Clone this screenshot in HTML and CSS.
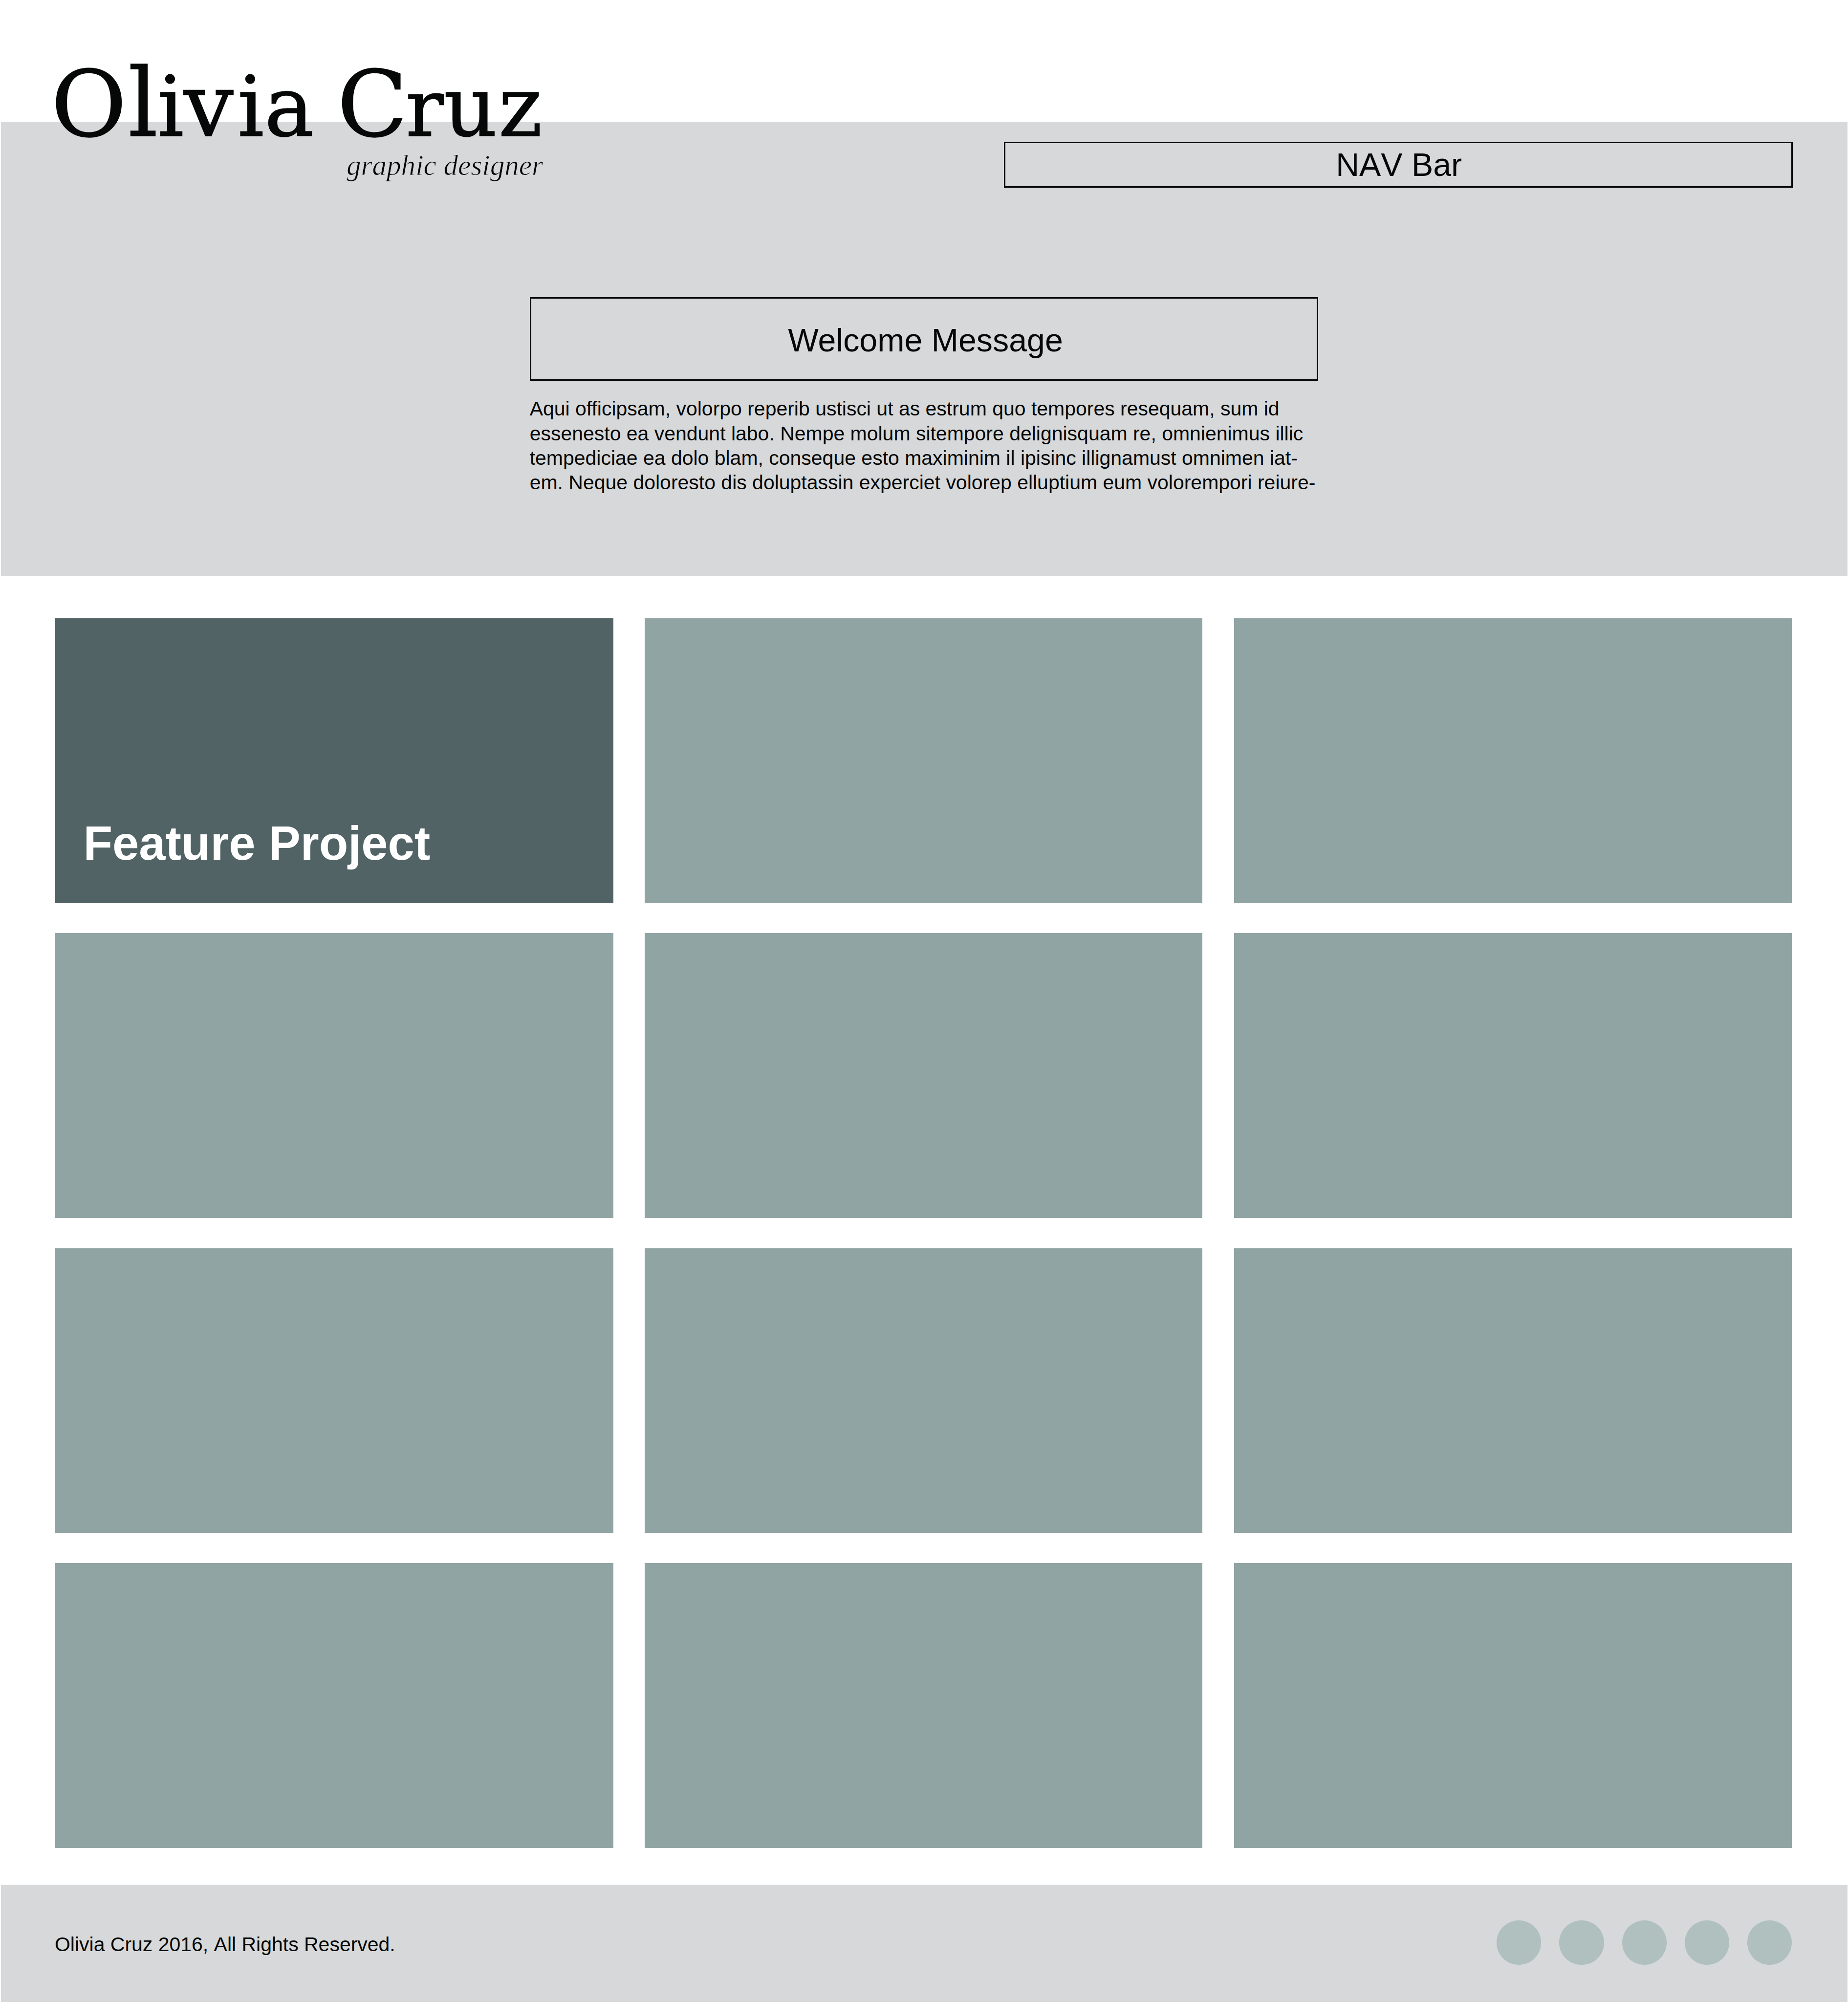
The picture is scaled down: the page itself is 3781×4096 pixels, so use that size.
FILE: index.html
```html
<!DOCTYPE html>
<html lang="en">
<head>
<meta charset="utf-8">
<title>Olivia Cruz – graphic designer</title>
<link rel="stylesheet" href="styles.css">
</head>
<body>
<header class="hero">
  <div class="masthead">
    <svg class="logo" viewBox="80 60 1070 330" role="img" aria-label="Olivia Cruz, graphic designer">
      <text class="logo-name" y="278.3"><tspan class="cap" x="104.8">O</tspan><tspan class="tall" x="262">l</tspan><tspan x="322">i</tspan><tspan class="wide" x="376">v</tspan><tspan x="486 541">ia</tspan> <tspan class="cap" x="690">C</tspan><tspan class="narrow" x="830">r</tspan><tspan x="908 1020">uz</tspan></text>
      <text class="logo-role" x="709" y="358" textLength="402">graphic designer</text>
    </svg>
    <nav class="nav">NAV Bar</nav>
  </div>
  <section class="welcome">
    <h1 class="welcome-title">Welcome Message</h1>
    <p class="welcome-text">Aqui officipsam, volorpo reperib ustisci ut as estrum quo tempores resequam, sum id<br>essenesto ea vendunt labo. Nempe molum sitempore delignisquam re, omnienimus illic<br>tempediciae ea dolo blam, conseque esto maximinim il ipisinc illignamust omnimen iat-<br>em. Neque doloresto dis doluptassin experciet volorep elluptium eum volorempori reiure-</p>
  </section>
</header>
<main class="projects">
  <article class="tile tile-feature"><h2 class="tile-title">Feature Project</h2></article>
  <article class="tile"></article>
  <article class="tile"></article>
  <article class="tile"></article>
  <article class="tile"></article>
  <article class="tile"></article>
  <article class="tile"></article>
  <article class="tile"></article>
  <article class="tile"></article>
  <article class="tile"></article>
  <article class="tile"></article>
  <article class="tile"></article>
</main>
<footer class="footer">
  <p class="copyright">Olivia Cruz 2016, All Rights Reserved.</p>
  <div class="social">
    <span class="dot"></span><span class="dot"></span><span class="dot"></span><span class="dot"></span><span class="dot"></span>
  </div>
</footer>
</body>
</html>
```
FILE: styles.css
```css
* { box-sizing: border-box; }

body {
  margin: 0;
  width: 3781px;
  height: 4096px;
  overflow: hidden;
  background: #fff;
  color: #060807;
  font-family: "Liberation Sans", Arial, sans-serif;
  display: flex;
  flex-direction: column;
}

h1, h2, p { margin: 0; font-weight: 400; }

.hero {
  flex: none;
  height: 929.7px;
  margin: 249px 1.5px 0;
  background: #d7d8da;
}

.masthead {
  display: flex;
  justify-content: space-between;
  align-items: flex-start;
  height: 359.4px;
  padding: 0 112px 0 78.5px;
}

/* The name straddles the top edge of the grey band. */
.logo {
  width: 1070px;
  height: 330px;
  margin-top: -189px;
  fill: #060807;
  overflow: visible;
}

.logo-name {
  font: 170px "DejaVu Serif", serif;
  stroke: #060807;
  stroke-width: 1.5px;
}
.logo-name .cap { font-size: 188px; }
.logo-name .tall { font-size: 192px; }
.logo-name .wide { font-size: 180px; }
.logo-name .narrow { font-size: 163px; }

/* The band-coloured stroke trims the letters to a light weight. */
.logo-role {
  font: italic 59.2px "Liberation Serif", serif;
  stroke: #d7d8da;
  stroke-width: 0.9px;
}

.nav {
  width: 1613.7px;
  height: 94.5px;
  margin-top: 40.6px;
  padding: 0.5px 0 0 3px;
  border: 3px solid #060807;
  font-size: 66.3px;
  font-kerning: none;
  line-height: 89px;
  text-align: center;
}

.welcome { width: 1613.7px; margin: 0 auto; }

.welcome-title {
  height: 170.4px;
  padding: 2.4px 0 0 6px;
  border: 3px solid #060807;
  font-size: 66.3px;
  line-height: 164.4px;
  text-align: center;
}

.welcome-text {
  margin-top: 32.7px;
  font-size: 40.97px;
  line-height: 50.2px;
  white-space: nowrap;
}

.projects {
  flex: none;
  display: grid;
  grid-template-columns: repeat(3, 1141.3px);
  grid-auto-rows: 582.5px;
  gap: 61.9px 64.4px;
  padding: 86.4px 0 0 113.4px;
}

.tile { background: #90a4a3; }

.tile-feature {
  display: flex;
  align-items: flex-end;
  padding: 0 0 73px 57px;
  background: #516365;
}

.tile-title {
  color: #fff;
  font-size: 97.5px;
  font-weight: 700;
  line-height: 1;
}

.footer {
  flex: none;
  display: flex;
  justify-content: space-between;
  align-items: center;
  height: 239.8px;
  margin: 75.2px 1.5px 0;
  padding: 0 113.3px 0 110.5px;
  background: #d7d8da;
}

.copyright { padding-top: 5px; font-size: 40.97px; font-kerning: none; }

.social { display: flex; gap: 37px; margin-top: -2.4px; }

.dot {
  width: 91.2px;
  height: 91.2px;
  border-radius: 50%;
  background: #afc0bf;
}
```
